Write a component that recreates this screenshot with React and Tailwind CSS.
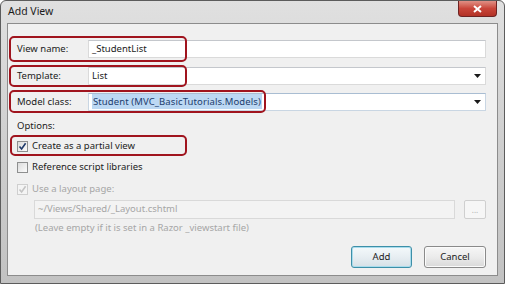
import React from "react";

const font = { fontFamily: '"Noto Sans", "Open Sans", sans-serif' };

function Arrow() {
  return (
    <svg width="7" height="4" viewBox="0 0 7 4" className="shrink-0">
      <path d="M0 0 H7 L3.5 4 Z" fill="#1a1a1a" />
    </svg>
  );
}

function Check({ color = "#1f3a6b" }) {
  return (
    <svg width="9" height="9" viewBox="0 0 9 9">
      <path d="M1.5 4.5 L3.6 7 L7.6 1.2" fill="none" stroke={color} strokeWidth="1.6" />
    </svg>
  );
}

function CheckBox({ checked, disabled }) {
  return (
    <div
      className={
        "w-[11px] h-[11px] border flex items-center justify-center shrink-0 " +
        (disabled
          ? "border-[#cfcfcf] bg-[#f4f4f4]"
          : "border-[#8e8f8f] bg-gradient-to-br from-[#dcdcdc] to-[#fbfbfb]")
      }
    >
      {checked && <Check color={disabled ? "#c4c4c4" : "#1f3a6b"} />}
    </div>
  );
}

export default function App() {
  return (
    <div
      className="w-[505px] h-[284px] relative flex flex-col border border-[#5c5c5c] rounded-t-[6px] bg-gradient-to-b from-[#e0e0e0] via-[#cfcfcf] to-[#c2c2c2] px-[6px] pb-[7px] text-[9.5px] text-[#1b1b1b] overflow-hidden"
      style={font}
    >
      {/* title bar */}
      <div className="h-[22px] flex items-center pl-[1px] text-[10.5px] text-[#1b1b1b]">Add View</div>

      {/* close button */}
      <div className="absolute top-0 right-[7px] w-[39px] h-[16px] rounded-b-[4px] border border-t-0 border-[#6d2323] bg-gradient-to-b from-[#e08f85] via-[#c9453a] to-[#b23226] flex items-center justify-center">
        <svg width="9" height="8" viewBox="0 0 9 8">
          <path d="M1 1 L8 7 M8 1 L1 7" stroke="white" strokeWidth="2" />
        </svg>
      </div>

      {/* content panel */}
      <div className="flex-1 border border-[#8c8c8c] bg-[#f0f0f0] pl-[9px] pr-[11px] pt-[16px] flex flex-col">
        {/* View name */}
        <div className="relative flex items-center h-[18px]">
          <div className="w-[71px]">View name:</div>
          <div className="flex-1 h-full bg-white border border-[#dadada] border-t-[#c4c7cc] flex items-center pl-[3px]">
            _StudentList
          </div>
          <div className="absolute left-[-8px] top-[-4px] w-[178px] h-[26px] border-2 border-[#a0141e] rounded-[5px]" />
        </div>

        {/* Template */}
        <div className="relative flex items-center h-[18px] mt-[9px]">
          <div className="w-[71px]">Template:</div>
          <div className="flex-1 h-full bg-white border border-[#dadada] border-t-[#c4c7cc] flex items-center pl-[3px] pr-[4px]">
            <span className="flex-1">List</span>
            <Arrow />
          </div>
          <div className="absolute left-[-8px] top-[-2px] w-[178px] h-[22px] border-2 border-[#a0141e] rounded-[5px]" />
        </div>

        {/* Model class */}
        <div className="relative flex items-center h-[18px] mt-[8px]">
          <div className="w-[71px]">Model class:</div>
          <div className="flex-1 h-full bg-white border border-[#c9d6e3] border-t-[#a9bdd2] flex items-center pl-[3px] pr-[4px]">
            <span className="flex-1">
              <span className="bg-[#bcd8f3] text-[#1c3d6e] px-[1px] py-[1px] tracking-[0.1px]">Student (MVC_BasicTutorials.Models)</span>
            </span>
            <Arrow />
          </div>
          <div className="absolute left-[-8px] top-[-3px] w-[257px] h-[23px] border-2 border-[#a0141e] rounded-[5px]" />
        </div>

        {/* Options */}
        <div className="mt-[8px] h-[14px] flex items-center">Options:</div>

        <div className="relative mt-[7px] h-[12px] flex items-center gap-[4px]">
          <CheckBox checked />
          <span>Create as a partial view</span>
          <div className="absolute left-[-7px] top-[-5px] w-[177px] h-[21px] border-2 border-[#a0141e] rounded-[5px]" />
        </div>

        <div className="mt-[9px] h-[12px] flex items-center gap-[4px]">
          <CheckBox />
          <span>Reference script libraries</span>
        </div>

        <div className="mt-[10px] h-[12px] flex items-center gap-[4px] text-[#a6a6a6]">
          <CheckBox checked disabled />
          <span>Use a layout page:</span>
        </div>

        <div className="mt-[5px] ml-[17px] h-[19px] flex items-center gap-[9px]">
          <div className="flex-1 h-full border border-[#d9d9d9] bg-[#f3f3f3] flex items-center pl-[3px] text-[#a6a6a6]">
            ~/Views/Shared/_Layout.cshtml
          </div>
          <div className="w-[22px] h-full border border-[#cfcfcf] rounded-[2px] bg-[#f6f6f6] flex items-end justify-center pb-[4px] text-[#b0b0b0] text-[8px] leading-none">
            ...
          </div>
        </div>

        <div className="ml-[18px] mt-[2px] h-[14px] flex items-center text-[#a6a6a6]">
          (Leave empty if it is set in a Razor _viewstart file)
        </div>

        <div className="mt-[11px] flex justify-end gap-[12px]">
          <div className="w-[61px] h-[22px] rounded-[3px] border border-[#3d8fa8] bg-gradient-to-b from-[#f4f9fb] via-[#e7eef2] to-[#d6e0e6] flex items-center justify-center shadow-[inset_0_0_0_1px_#a9dcec]">
            Add
          </div>
          <div className="w-[62px] h-[22px] rounded-[3px] border border-[#8a8a8a] bg-gradient-to-b from-[#f6f6f6] via-[#ebebeb] to-[#d9d9d9] flex items-center justify-center shadow-[inset_0_0_0_1px_#fbfbfb]">
            Cancel
          </div>
        </div>
      </div>
    </div>
  );
}
